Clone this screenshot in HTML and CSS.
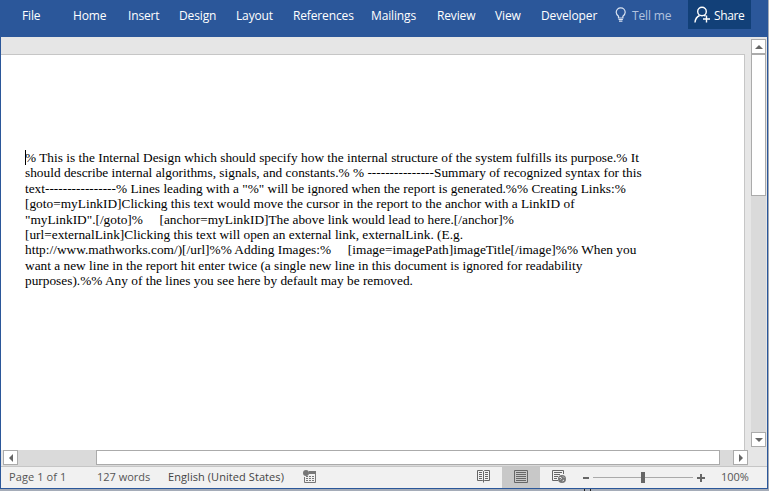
FILE: index.html
```
<!DOCTYPE html>
<html lang="en">
<head>
<meta charset="utf-8">
<title>Document</title>
<link rel="stylesheet" href="styles.css">
</head>
<body>
<div class="window">
  <header class="ribbon">
    <nav class="tabs">
      <span class="tab file">File</span><span class="tab home">Home</span><span class="tab insert">Insert</span><span class="tab design">Design</span><span class="tab layout">Layout</span><span class="tab references">References</span><span class="tab mailings">Mailings</span><span class="tab review">Review</span><span class="tab view">View</span><span class="tab developer">Developer</span>
    </nav>
    <div class="tell">
      <svg width="12" height="16" viewBox="0 0 12 16" fill="none" stroke="#dbe4f2" stroke-width="1.2"><path d="M3.500 11V9.300C2 8 1.200 6.900 1.200 5.300a4.500 4.500 0 0 1 9 0c0 1.600-.8 2.700-2.300 4V11zM3.500 12.500h4.400M4 14.200h3.400"/></svg>
      <span>Tell me</span>
    </div>
    <div class="share">
      <svg width="17" height="17" viewBox="0 0 17 17" fill="none" stroke="#fff" stroke-width="1.400"><circle cx="8" cy="5.500" r="4.300"/><path d="M1 16.500c.3-3.600 2-5.900 4.600-7M10.300 9l1 1.200M12.500 9.500v7M9 13h7"/></svg>
      <span>Share</span>
    </div>
  </header>
  <div class="workspace">
    <div class="canvas">
      <main class="page">
        <div class="text">
          <p class="wide"><i class="caret"></i>% This is the Internal Design which should specify how the internal structure of the system fulfills its purpose.% It</p>
          <p>should describe internal algorithms, signals, and constants.% % ---------------Summary of recognized syntax for this</p>
          <p>text----------------% Lines leading with a "%" will be ignored when the report is generated.%% Creating Links:%</p>
          <p class="wide">[goto=myLinkID]Clicking this text would move the cursor in the report to the anchor with a LinkID of</p>
          <p>"myLinkID".[/goto]%     [anchor=myLinkID]The above link would lead to here.[/anchor]%</p>
          <p>[url=externalLink]Clicking this text will open an external link, externalLink. (E.g.</p>
          <p class="wide">http://www.mathworks.com/)[/url]%% Adding Images:%     [image=imagePath]imageTitle[/image]%% When you</p>
          <p>want a new line in the report hit enter twice (a single new line in this document is ignored for readability</p>
          <p>purposes).%% Any of the lines you see here by default may be removed.</p>
        </div>
      </main>
      <div class="hscroll">
        <div class="button"><svg width="4" height="8" viewBox="0 0 4 8"><path d="M4 0v8L0 4z" fill="#666"/></svg></div>
        <div class="hthumb"></div>
        <div class="button"><svg width="4" height="8" viewBox="0 0 4 8"><path d="M0 0v8l4-4z" fill="#666"/></svg></div>
      </div>
    </div>
    <div class="vscroll">
      <div class="button"><svg width="8" height="4" viewBox="0 0 8 4"><path d="M0 4h8L4 0z" fill="#666"/></svg></div>
      <div class="vthumb"></div>
      <div class="button"><svg width="8" height="4" viewBox="0 0 8 4"><path d="M0 0h8L4 4z" fill="#666"/></svg></div>
    </div>
  </div>
  <footer class="status">
    <span class="pages">Page 1 of 1</span>
    <span class="words">127 words</span>
    <span class="lang">English (United States)</span>
    <svg class="macro" width="13" height="13" viewBox="0 0 13 13"><circle cx="3" cy="3" r="3" fill="#777"/><path d="M6 1h7v3H6z" fill="#777"/><path d="M1.500 7v5.500h11V3" fill="none" stroke="#777"/><path d="M3 6.500h8M3 8.500h8M3 10.500h8" stroke="#777" stroke-dasharray="2 1"/></svg>
    <div class="views">
      <div class="mode"><svg width="13" height="13" viewBox="0 0 13 13" fill="none" stroke="#666"><path d="M6.500 1.500v11M6.500 1.500 5.500.5h-5v10h5l1 1 1-1h5V.5h-5zM2 2.500h3M2 4.500h3M2 6.500h3M2 8.500h3M8 2.500h3M8 4.500h3M8 6.500h3M8 8.500h3"/></svg></div>
      <div class="mode active"><svg width="14" height="13" viewBox="0 0 14 13" fill="none" stroke="#666"><path d="M.5.5h13v12H.5zM2 2.500h10M2 4.500h10M2 6.500h10M2 8.500h10M2 10.500h10"/></svg></div>
      <div class="mode"><svg width="14" height="13" viewBox="0 0 14 13" fill="none" stroke="#666"><path d="M6 10.500H.5V.5h11V4M2 2.500h8M2 4.500h6M2 6.500h4M2 8.500h3"/><circle cx="10" cy="9" r="4" fill="#777" stroke="none"/><path d="m7.500 7.500 1.500 0 .5 1-1 1M11 6.500l1 1M10.500 11l1.500-1" stroke="#eee"/></svg></div>
    </div>
    <div class="zoom">
      <i class="minus"></i>
      <div class="slider"><i class="knob"></i></div>
      <svg width="8" height="8" viewBox="0 0 8 8"><path d="M4 0v8M0 4h8" stroke="#666" stroke-width="2"/></svg>
    </div>
    <span class="percent">100%</span>
  </footer>
</div>
<div class="behind"><i></i><i></i></div>
</body>
</html>
```
FILE: styles.css
```
* { box-sizing: border-box; }
body { margin: 0; width: 769px; height: 491px; overflow: hidden; background: #a5acb8; }
.window { width: 768px; height: 489px; display: flex; flex-direction: column; background: #2b579a; padding: 0 1px 1px; }
.ribbon { height: 37px; flex: none; display: flex; align-items: flex-start; font: 12px/31px "Open Sans", sans-serif; letter-spacing: -.14px; color: #fff; white-space: nowrap; }
.tabs { display: flex; padding-left: 21px; width: 614px; }
.tab { flex: none; }
.file { width: 51px; }
.home { width: 55px; }
.insert { width: 51px; }
.design { width: 57px; }
.layout { width: 57px; }
.references { width: 78px; }
.mailings { width: 66px; }
.review { width: 58px; }
.view { width: 46px; }
.tell { display: flex; width: 73px; color: #b2c3df; }
.tell svg { margin: 7px 5px 0 0; }
.share { display: flex; width: 63px; height: 29px; padding-left: 6px; background: #124078; letter-spacing: -.4px; }
.share svg { margin: 6px 3px 0 0; }
.workspace { height: 429px; flex: none; display: flex; background: #e6e6e6; }
.canvas { width: 750px; display: flex; flex-direction: column; }
.page { width: 744px; height: 396px; margin-top: 17px; border: solid #c6c6c6; border-width: 1px 1px 0 0; background: #fff; padding: 95px 0 0 24px; }
.text { font: 13.333px/15.400px "Liberation Serif", serif; color: #000; }
.text p { margin: 0; white-space: pre; position: relative; }
.text .wide { letter-spacing: .01px; }
.caret { position: absolute; left: 0; top: 0; width: 1px; height: 15px; background: #000; }
.hscroll { height: 16px; width: 745px; display: flex; justify-content: space-between; margin-left: 2px; background: #dadada; }
.button { width: 15px; height: 15px; flex: none; border: 1px solid #ababab; background: #fff; display: flex; align-items: center; justify-content: center; }
.hthumb { width: 624px; height: 15px; margin-left: 78px; margin-right: auto; border: 1px solid #ababab; background: #fff; }
.vscroll { width: 15px; height: 408px; margin-top: 2px; display: flex; flex-direction: column; background: #dadada; }
.vthumb { height: 142px; border: 1px solid #ababab; background: #fff; margin-bottom: auto; }
.status { flex: 1; display: flex; border-top: 1px solid #c6c6c6; background: #f1f1f1; font: 11px/20px "Open Sans", sans-serif; color: #555; white-space: nowrap; }
.pages { width: 88px; padding-left: 8px; margin-right: 8px; letter-spacing: .1px; }
.words { width: 71px; }
.lang { width: 135px; letter-spacing: .07px; color: #444; }
.macro { margin-top: 3px; }
.views { display: flex; margin-left: 148px; }
.mode { width: 38px; display: flex; justify-content: center; padding-top: 3px; }
.active { background: #c8c8c8; }
.zoom { display: flex; align-items: center; margin-left: 5px; }
.minus { width: 6px; height: 2px; background: #666; }
.slider { width: 100px; height: 1px; margin: 0 4px; background: #aaa; display: flex; align-items: center; justify-content: center; }
.knob { width: 4px; height: 11px; background: #666; }
.percent { margin-left: 16px; }
.behind { height: 2px; display: flex; padding-left: 584px; gap: 5px; }
.behind i { width: 1px; background: #222; }
```
